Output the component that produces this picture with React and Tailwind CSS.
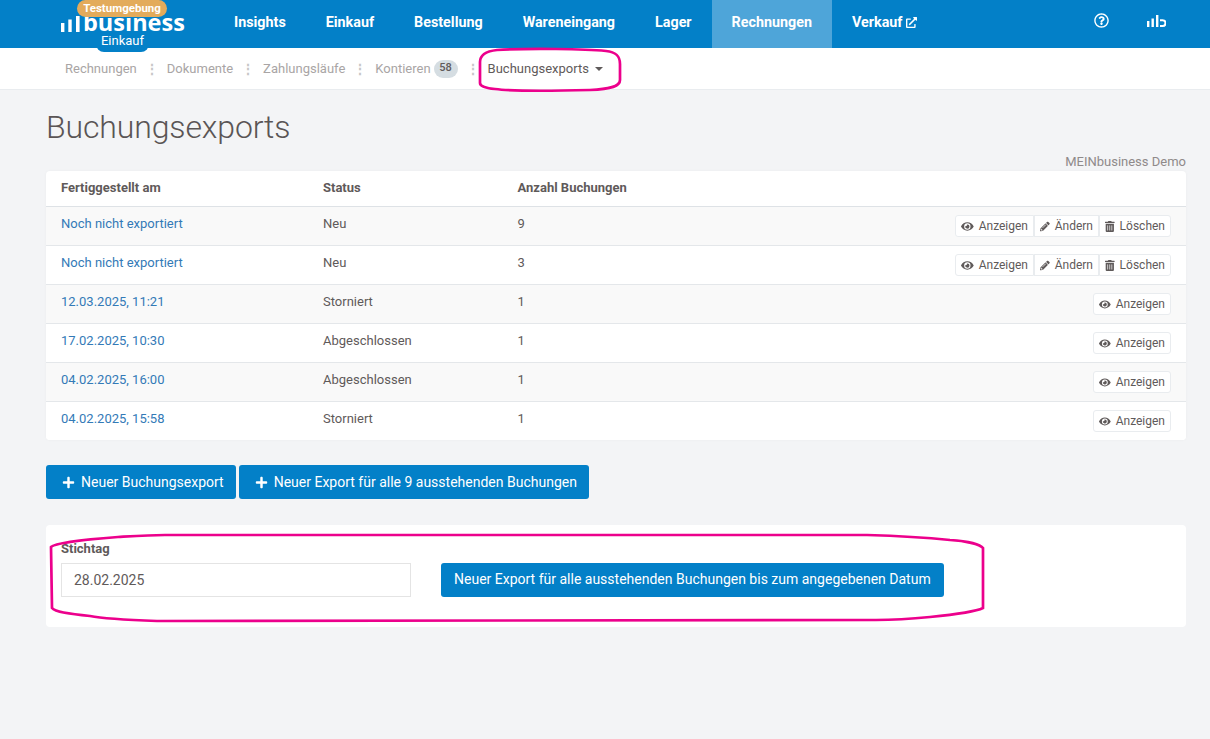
import { FaEye, FaPencilAlt, FaTrashAlt, FaPlus, FaRegQuestionCircle, FaExternalLinkAlt } from "react-icons/fa";

const navItems = ["Insights", "Einkauf", "Bestellung", "Wareneingang", "Lager", "Rechnungen"];

const rows = [
	{ date: "Noch nicht exportiert", status: "Neu", count: 9, edit: true },
	{ date: "Noch nicht exportiert", status: "Neu", count: 3, edit: true },
	{ date: "12.03.2025, 11:21", status: "Storniert", count: 1 },
	{ date: "17.02.2025, 10:30", status: "Abgeschlossen", count: 1 },
	{ date: "04.02.2025, 16:00", status: "Abgeschlossen", count: 1 },
	{ date: "04.02.2025, 15:58", status: "Storniert", count: 1 },
];

function Bars({ className }) {
	return (
		<svg viewBox="0 0 19 12" className={className} fill="currentColor">
			<rect x="0" y="6" width="2.4" height="6" />
			<rect x="4.5" y="3.5" width="2.4" height="8.5" />
			<rect x="9" y="0" width="2.4" height="12" />
			<path d="M13 4.2h2.6a3.9 3.9 0 0 1 0 7.8H13v-2h2.6a1.9 1.9 0 0 0 0-3.8H13z" />
		</svg>
	);
}

function LogoBars() {
	return (
		<svg viewBox="0 0 20 16" className="absolute left-[61px] top-[16px] w-[20px] h-[16px]" fill="currentColor">
			<rect x="0" y="7" width="3.4" height="9" />
			<rect x="7.3" y="3.5" width="3.4" height="12.5" />
			<rect x="15" y="0" width="3.6" height="16" />
		</svg>
	);
}

function Separator() {
	return <span className="w-[30px] text-center text-[#c8c8c8] text-[14px] font-bold leading-none">⋮</span>;
}

function RowButton({ icon, label, className = "" }) {
	return (
		<button className={`h-[22px] flex items-center justify-center gap-[5px] px-[5px] bg-white border border-[#e9ecef] text-[12px] text-[#5f5a5a] ${className}`}>
			{icon}
			<span>{label}</span>
		</button>
	);
}

function PrimaryButton({ children }) {
	return (
		<button className="h-[34px] flex items-center gap-[6px] pl-4 pr-[12px] bg-[#0380c8] rounded-[3px] text-white text-[14px]">
			<FaPlus className="text-[13px]" />
			{children}
		</button>
	);
}

export default function App() {
	return (
		<div className="relative min-h-[739px] bg-[#f3f4f6] overflow-hidden font-['Roboto',sans-serif] text-[13px] text-[#5f5a5a]">
			<header className="h-12 flex bg-[#0380c8] text-white">
				<div className="relative w-[214px] shrink-0">
					<LogoBars />
					<span className="absolute left-[83px] top-[14px] text-[23.5px] leading-[17px] font-bold font-['Open_Sans',sans-serif]">
						business
					</span>
					<span className="absolute left-[77px] top-0 h-[17px] w-[90px] flex items-center justify-center rounded-[9px] bg-[#e3ab5b] text-[11.5px] font-bold">
						Testumgebung
					</span>
					<span className="absolute left-[96px] top-[34px] h-[18px] w-[53px] flex items-start justify-center rounded-b-[8px] bg-[#0380c8] text-[13px] leading-[14px]">
						Einkauf
					</span>
				</div>
				<nav className="flex font-bold text-[14.32px]">
					{navItems.map((item) => (
						<a
							key={item}
							className={`h-12 flex items-center px-5 pb-[3px] ${item === "Rechnungen" ? "bg-[#4ea5d9]" : ""}`}
						>
							{item}
						</a>
					))}
					<a className="h-12 flex items-center gap-1 px-5 pb-[3px]">
						Verkauf
						<FaExternalLinkAlt className="text-[11px]" />
					</a>
				</nav>
				<div className="ml-auto flex items-center pr-[44px] pb-1 gap-[38px]">
					<FaRegQuestionCircle className="text-[15px] -mt-1" />
					<Bars className="w-[19px] h-[12px] -mt-[2px]" />
				</div>
			</header>

			<div className="h-[42px] flex items-center pl-[65px] bg-white border-b border-[#e9ecef] text-[13px] text-[#a9a5a5]">
				<span>Rechnungen</span>
				<Separator />
				<span>Dokumente</span>
				<Separator />
				<span>Zahlungsläufe</span>
				<Separator />
				<span>Kontieren</span>
				<span className="ml-[3px] h-[18px] w-[24px] flex items-center justify-center rounded-full bg-[#d5dde2] text-[#5f5a5a] text-[11px] font-medium">
					58
				</span>
				<Separator />
				<span className="text-[#5f5a5a]">Buchungsexports</span>
				<span className="ml-[6px] border-x-[4px] border-t-[4px] border-x-transparent border-t-[#5f5a5a]" />
			</div>

			<main className="mx-[46px] w-[1140px]">
				<h1 className="mt-[17px] h-[41px] text-[32px] leading-[41px] font-light tracking-[-0.13px] text-[#5a5555]">Buchungsexports</h1>
				<div className="h-[23px] pt-1 text-right text-[13px] leading-[20px] text-[#8f8a8a]">MEINbusiness Demo</div>

				<div className="bg-white rounded-[4px] overflow-hidden shadow-[0_0_3px_rgba(0,0,0,0.04)]">
					<div className="h-9 grid grid-cols-[262px_194.5px_1fr] items-center pl-[15px] pb-[2px] font-bold border-b border-[#dee2e6]">
						<span>Fertiggestellt am</span>
						<span>Status</span>
						<span>Anzahl Buchungen</span>
					</div>
					{rows.map((row, i) => (
						<div
							key={i}
							className={`grid grid-cols-[262px_194.5px_1fr_auto] pl-[15px] pr-[15px] pt-[9px] ${i % 2 === 0 ? "bg-[#f9f9f9]" : "bg-white"} ${i < rows.length - 1 ? "h-[39px] border-b border-[#e4e7ea]" : "h-[38px]"}`}
						>
							<a className="text-[#337ab7] leading-[16px]">{row.date}</a>
							<span className="leading-[16px]">{row.status}</span>
							<span className="leading-[16px]">{row.count}</span>
							<div className="flex -mt-px">
								<RowButton
									icon={<FaEye className="text-[13px]" />}
									label="Anzeigen"
									className={row.edit ? "w-[79px] rounded-l-[3px]" : "w-[78px] rounded-[3px]"}
								/>
								{row.edit && (
									<>
										<RowButton icon={<FaPencilAlt className="text-[11px]" />} label="Ändern" className="w-[65px]" />
										<RowButton icon={<FaTrashAlt className="text-[11px]" />} label="Löschen" className="w-[72px] rounded-r-[3px]" />
									</>
								)}
							</div>
						</div>
					))}
				</div>

				<div className="mt-[25px] flex gap-[3px]">
					<PrimaryButton>Neuer Buchungsexport</PrimaryButton>
					<PrimaryButton>Neuer Export für alle 9 ausstehenden Buchungen</PrimaryButton>
				</div>

				<div className="mt-[26px] h-[102px] px-[15px] pt-[16px] bg-white rounded-[4px]">
					<div className="font-bold text-[13px] leading-[15px] mb-[7px]">Stichtag</div>
					<div className="flex gap-[30px]">
						<input
							readOnly
							value="28.02.2025"
							className="w-[350px] h-[34px] px-[12px] border border-[#e4e4e4] text-[14px] text-[#5f5a5a] outline-none"
						/>
						<button className="h-[34px] px-[13px] pb-[2px] bg-[#0380c8] rounded-[3px] text-white text-[14px]">
							Neuer Export für alle ausstehenden Buchungen bis zum angegebenen Datum
						</button>
					</div>
				</div>
			</main>

			{/* hand drawn marks over the page */}
			<svg className="absolute inset-0 w-[1210px] h-[739px] pointer-events-none" viewBox="0 0 1210 739" fill="none" stroke="#ec008c" strokeWidth="2.7">
				<path d="M480 83L480 62C480 54 488 51 497 50C530 48 585 49 606 51C616 52 620 56 620 64L620 80C620 86 612 89 590 90C550 91 510 91 495 89C484 88 480 86 480 83Z" />
				<path d="M52 608L51 547C55 543 90 539 118 537C135 536 150 535 165 535L867 535C900 536 930 538 950 540C965 541 980 544 983 548L983 608C975 612 950 615 930 617C910 619 890 620 876 620L157 621C130 620 100 618 90 616C70 614 55 612 52 608Z" />
			</svg>
		</div>
	);
}
